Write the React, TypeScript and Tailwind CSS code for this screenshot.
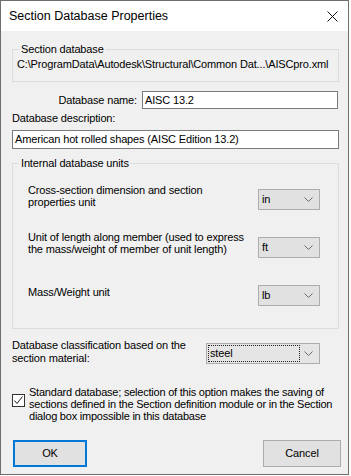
import React from 'react'

const body = { fontFamily: '"Liberation Sans", Arial, sans-serif' }

function Chevron() {
  return (
    <svg width="9" height="5" viewBox="0 0 9 5" className="shrink-0">
      <polyline points="0.5,0.5 4.5,4.5 8.5,0.5" fill="none" stroke="#6b6b6b" strokeWidth="1" />
    </svg>
  )
}

function Combo({ value, className = '' }: { value: string; className?: string }) {
  return (
    <div className={`h-[21px] border border-[#adadad] bg-[#e1e1e1] flex items-center ${className}`}>
      <span className="flex-1 pl-[3px] leading-[13px]">{value}</span>
      <span className="mr-[6px] flex items-center"><Chevron /></span>
    </div>
  )
}

export default function App() {
  return (
    <div className="w-[351px] h-[476px] bg-white text-[11px] tracking-[-0.15px] text-black" style={body}>
      <div className="w-[349px] h-[475px] border border-[#6e6e6e] flex flex-col">
        {/* Title bar */}
        <div className="h-[30px] bg-white flex items-center pl-[8px] pr-[10px] shrink-0">
          <span className="flex-1 text-[12.5px] tracking-normal">
            Section Database Properties
          </span>
          <svg width="11" height="11" viewBox="0 0 11 11">
            <line x1="0.5" y1="0.5" x2="10.5" y2="10.5" stroke="#111" strokeWidth="1" />
            <line x1="10.5" y1="0.5" x2="0.5" y2="10.5" stroke="#111" strokeWidth="1" />
          </svg>
        </div>

        {/* Body */}
        <div className="flex-1 bg-[#f0f0f0] pl-[11px] pt-[12px]">
          <fieldset className="w-[327px] border border-[#dcdcdc] pb-[10px]">
            <legend className="ml-[6px] px-[2px] leading-[13px]">Section database</legend>
            <div className="mt-[2px] pl-[4px] leading-[13px] whitespace-nowrap">
              C:\ProgramData\Autodesk\Structural\Common Dat...\AISCpro.xml
            </div>
          </fieldset>

          <div className="mt-[9px] w-[326px] flex items-center">
            <span className="flex-1 text-right pr-[5px] leading-[13px]">Database name:</span>
            <div className="w-[196px] h-[18px] border border-[#7a7a7a] bg-white flex items-center pl-[2px] leading-[13px]">
              AISC 13.2
            </div>
          </div>

          <div className="mt-[3px] leading-[13px]">Database description:</div>
          <div className="mt-[5px] w-[327px] h-[19px] border border-[#7a7a7a] bg-white flex items-center pl-[2px] leading-[13px]">
            American hot rolled shapes (AISC Edition 13.2)
          </div>

          <fieldset className="mt-[8px] w-[327px] border border-[#dcdcdc] pb-[22px] pl-[15px]">
            <legend className="ml-[-9px] px-[2px] leading-[13px]">Internal database units</legend>

            <div className="mt-[14px] flex items-start">
              <div className="flex-1 leading-[12px]">
                Cross-section dimension and section<br />properties unit
              </div>
              <Combo value="in" className="mt-[5px] w-[62px] mr-[18px]" />
            </div>

            <div className="mt-[21px] flex items-start">
              <div className="flex-1 leading-[12px] whitespace-nowrap">
                Unit of length along member (used to express<br />the mass/weight of member of unit length)
              </div>
              <Combo value="ft" className="mt-[6px] w-[62px] mr-[18px]" />
            </div>

            <div className="mt-[27px] flex items-start">
              <div className="flex-1 mt-[1px] leading-[12px]">Mass/Weight unit</div>
              <Combo value="lb" className="w-[62px] mr-[18px]" />
            </div>
          </fieldset>

          <div className="mt-[10px] flex items-start">
            <div className="w-[194px] leading-[13px]">
              Database classification based on the<br />section material:
            </div>
            <div className="mt-[4px] w-[114px] h-[21px] border border-[#adadad] bg-[#e5e5e5] flex items-center">
              <div className="ml-[1px] w-[92px] h-[17px] border border-dotted border-[#222] flex items-center pl-[1px] leading-[13px]">
                steel
              </div>
              <span className="ml-auto mr-[6px] flex items-center"><Chevron /></span>
            </div>
          </div>

          <div className="mt-[21px] flex items-start">
            <div className="mt-[8px] w-[13px] h-[13px] border border-[#333] bg-white flex items-center justify-center shrink-0">
              <svg width="11" height="11" viewBox="0 0 11 11">
                <polyline points="1.5,5.5 4,8.5 9.5,1.5" fill="none" stroke="#222" strokeWidth="1" />
              </svg>
            </div>
            <div className="ml-[4px] leading-[12px] whitespace-nowrap tracking-[-0.22px]">
              Standard database; selection of this option makes the saving of<br />
              sections defined in the Section definition module or in the Section<br />
              dialog box impossible in this database
            </div>
          </div>

          <div className="mt-[18px] w-[329px] flex items-center pl-[1px]">
            <button className="w-[74px] h-[27px] border-2 border-[#0078d7] bg-[#e1e1e1] text-[11px] leading-[13px]">
              OK
            </button>
            <button className="ml-auto w-[78px] h-[27px] border border-[#adadad] bg-[#e1e1e1] text-[11px] leading-[13px]">
              Cancel
            </button>
          </div>
        </div>
      </div>
    </div>
  )
}
